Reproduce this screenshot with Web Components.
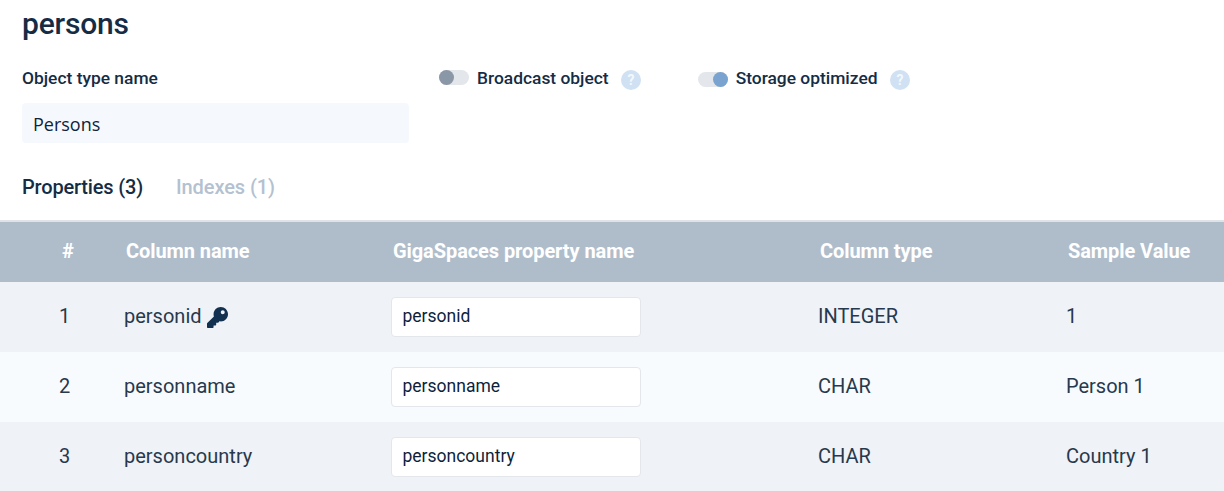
<!DOCTYPE html>
<html><head><meta charset="utf-8">
<style>html,body{margin:0;background:#fff;overflow:hidden}body{font-family:Roboto,"Liberation Sans",sans-serif;color:#152c44}</style>
</head><body>
<gs-form></gs-form>
<gs-tabs></gs-tabs>
<gs-table></gs-table>
<script>
const help=`<svg width="20" height="20" viewBox="0 0 20 20"><circle cx="10" cy="10" r="10" fill="#cfe1f3"/><text x="10" y="15" text-anchor="middle" font-family="Roboto" font-weight="700" font-size="14" fill="#f3f8fc">?</text></svg>`;
class GsToggle extends HTMLElement{constructor(){super();const on=this.hasAttribute('on');this.attachShadow({mode:'open'}).innerHTML=`<style>
:host{display:flex;align-items:center}
.t{width:30px;height:15px;border-radius:8px;background:#e3e6ea;position:relative;margin-right:8px;margin-top:${on?1:-3}px}
.k{position:absolute;top:0;${on?'right:0':'left:0'};width:15px;height:15px;border-radius:50%;background:${on?'#7aa3cf':'#8a97a6'}}
.l{font-size:17.4px;font-weight:500;line-height:20px;padding-bottom:2px}
.h{display:flex;margin-left:12px;margin-top:2px}
</style><div class="t"><div class="k"></div></div><span class="l"><slot></slot></span><span class="h">${help}</span>`}}
customElements.define('gs-toggle',GsToggle);
class GsForm extends HTMLElement{constructor(){super();this.attachShadow({mode:'open'}).innerHTML=`<style>
:host{display:block;padding:7px 0 0 22px;height:161px;box-sizing:border-box}
h1{margin:0;font-size:30px;line-height:34px;font-weight:500;letter-spacing:-.2px}
.row{display:flex;margin-top:28px;height:20px;align-items:center}
.name{width:417px;font-size:17.4px;font-weight:500;line-height:20px;padding-bottom:2px}
gs-toggle{margin-right:57px}
.inp{margin-top:14px;width:387px;height:40px;box-sizing:border-box;background:#f5f9fe;border-radius:4px;padding-left:11px;font:18px/42px "Open Sans",sans-serif;color:#10233a}
</style><h1>persons</h1>
<div class="row"><div class="name">Object type name</div><gs-toggle>Broadcast object</gs-toggle><gs-toggle on>Storage optimized</gs-toggle></div>
<div class="inp">Persons</div>`}}
customElements.define('gs-form',GsForm);
class GsTabs extends HTMLElement{constructor(){super();this.attachShadow({mode:'open'}).innerHTML=`<style>
:host{display:flex;height:61px;box-sizing:border-box;padding:14px 0 0 22px;gap:33px;border-bottom:2px solid #dfe2e6;font-size:20px;font-weight:500;line-height:24px;letter-spacing:-.18px}
.off{color:#b3c1d0;letter-spacing:-.08px}
</style><span>Properties (3)</span><span class="off">Indexes (1)</span>`}}
customElements.define('gs-tabs',GsTabs);
const cols='grid-template-columns:124px 267px 427px 248px 1fr';
class GsHead extends HTMLElement{constructor(){super();this.attachShadow({mode:'open'}).innerHTML=`<style>
:host{display:grid;${cols};height:60px;align-items:center;background:#afbdcb;color:#fff;font-size:20px;font-weight:700;letter-spacing:-.08px;line-height:24px}
span{padding-left:2px;padding-bottom:2px}
.n{padding-left:62px}
</style><span class="n">#</span><span>Column name</span><span>GigaSpaces property name</span><span>Column type</span><span>Sample Value</span>`}}
customElements.define('gs-head',GsHead);
class GsRow extends HTMLElement{constructor(){super();const a=k=>this.getAttribute(k);const key=this.hasAttribute('key')?`<svg width="21" height="21" viewBox="0 0 512 512" style="margin-left:5px;margin-top:2px"><path fill="#12304f" d="M512 176.001C512 273.203 433.202 352 336 352c-11.22 0-22.19-1.062-32.827-3.069l-24.012 27.014A23.999 23.999 0 0 1 261.223 384H224v40c0 13.255-10.745 24-24 24h-40v40c0 13.255-10.745 24-24 24H24c-13.255 0-24-10.745-24-24v-78.059c0-6.365 2.529-12.47 7.029-16.971l161.802-161.802C163.108 213.814 160 195.271 160 176 160 78.798 238.797.001 335.999 0 433.488-.001 512 78.511 512 176.001zM336 128c0 26.51 21.49 48 48 48s48-21.49 48-48-21.49-48-48-48-48 21.49-48 48z"/></svg>`:'';this.attachShadow({mode:'open'}).innerHTML=`<style>
:host{display:grid;${cols};height:70px;align-items:center;font-size:20px;line-height:24px;color:#27394d;background:var(--bg)}
span{padding-bottom:2px}
.n{padding-left:59px}
.c{display:flex;align-items:center}
.i{width:250px;height:40px;box-sizing:border-box;background:#fff;border:1px solid #e3e6ea;border-radius:4px;padding-left:10.5px;font-size:17.5px;line-height:36px;color:#0e1f3d}
</style><span class="n">${a('n')}</span><span class="c">${a('name')}${key}</span><div class="i">${a('name')}</div><span>${a('type')}</span><span>${a('val')}</span>`}}
customElements.define('gs-row',GsRow);
class GsTable extends HTMLElement{constructor(){super();this.attachShadow({mode:'open'}).innerHTML=`<style>:host{display:block}
gs-row:nth-of-type(odd){--bg:#eff2f7} gs-row:nth-of-type(even){--bg:#f8fbfe}</style>
<gs-head></gs-head>
<gs-row n="1" name="personid" type="INTEGER" val="1" key></gs-row>
<gs-row n="2" name="personname" type="CHAR" val="Person 1"></gs-row>
<gs-row n="3" name="personcountry" type="CHAR" val="Country 1"></gs-row>`}}
customElements.define('gs-table',GsTable);
</script></body></html>
